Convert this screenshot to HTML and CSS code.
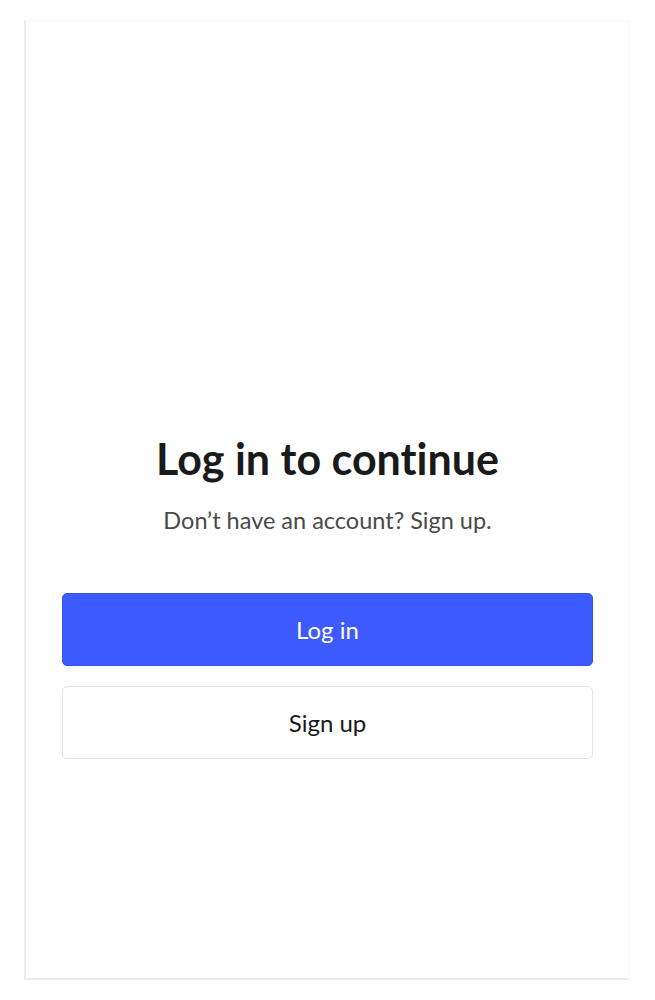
FILE: index.html
```html
<!DOCTYPE html>
<html>
<head>
<meta charset="utf-8">
<link rel="stylesheet" href="styles.css">
</head>
<body>
<div class="panel">
  <div class="content">
    <h1 class="title">Log in to continue</h1>
    <p class="subtitle">Don’t have an account? Sign up.</p>
    <div class="actions">
      <button class="btn btn-primary">Log in</button>
      <button class="btn btn-secondary">Sign up</button>
    </div>
  </div>
</div>
</body>
</html>
```
FILE: styles.css
```css
html, body {
  margin: 0;
  padding: 0;
  background: #ffffff;
}
body {
  font-family: Lato, "Open Sans", sans-serif;
  font-variant-ligatures: none;
  padding: 20px 26px 20px 24px;
}
.panel {
  height: 960px;
  box-sizing: border-box;
  border-left: 2px solid #ececec;
  border-bottom: 2px solid #ececec;
  border-top: 1px solid #f8f8f8;
  border-right: 1px solid #f6f6f6;
  padding: 0 35px 0 36px;
}
.content {
  padding-top: 413px;
}
.title {
  margin: 0;
  text-align: center;
  font-size: 43px;
  font-weight: 700;
  color: #1a1a1a;
  line-height: 50px;
}
.subtitle {
  margin: 20px 0 0;
  text-align: center;
  font-size: 23.5px;
  color: #4a4a4a;
  line-height: 32px;
}
.actions {
  margin-top: 57px;
  display: flex;
  flex-direction: column;
  gap: 20px;
}
.btn {
  display: block;
  width: 100%;
  height: 73px;
  font-family: Lato, "Open Sans", sans-serif;
  font-variant-ligatures: none;
  font-size: 24px;
  border-radius: 5px;
  cursor: pointer;
}
.btn-primary {
  background: #3d5afe;
  color: #ffffff;
  border: 1px solid #3550f0;
}
.btn-secondary {
  background: #ffffff;
  color: #1a1a1a;
  border: 1px solid #e3e3e3;
}
```
